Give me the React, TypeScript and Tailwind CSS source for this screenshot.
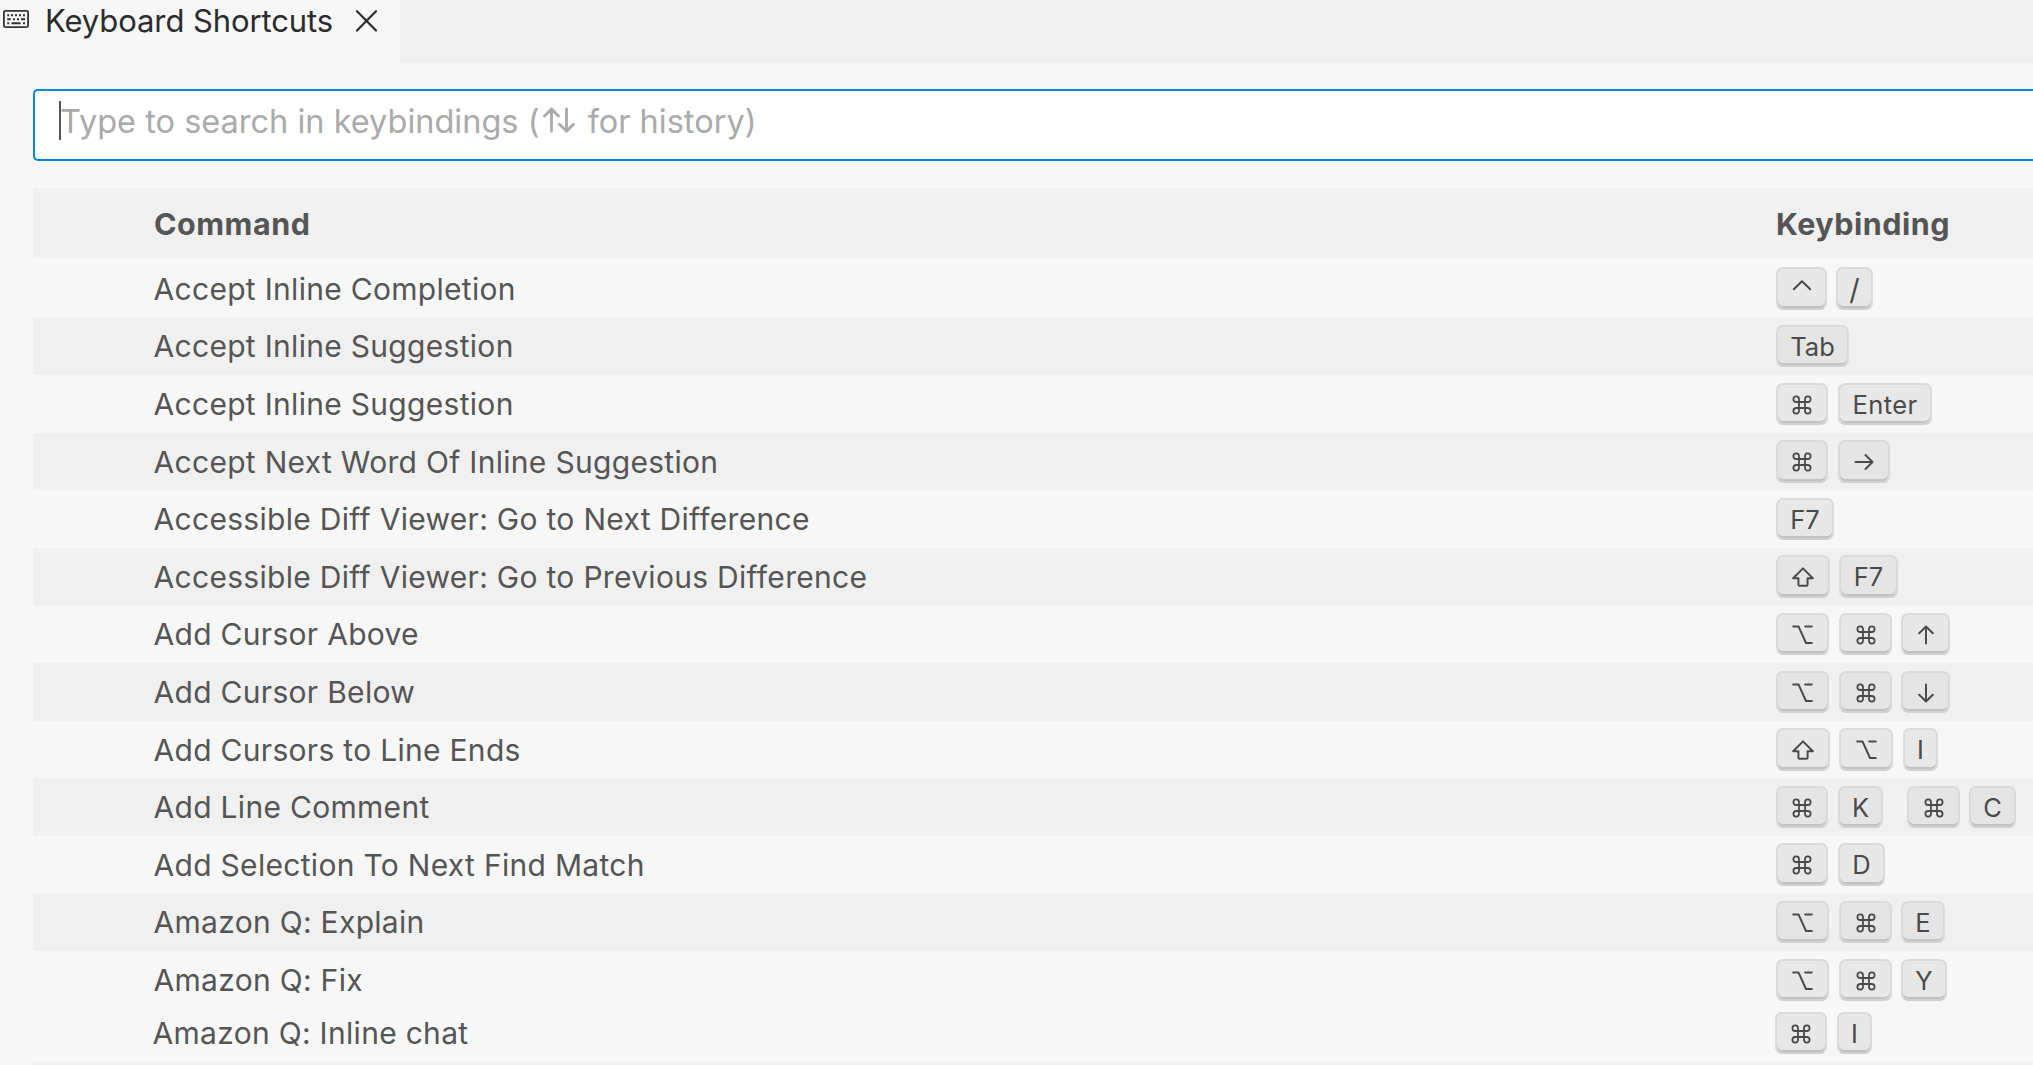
import React from "react";

type Key = { k: string; w: string; m: string };
type Chord = Key[];
type Row = { name: string; h: string; pad: string; kh: string; keys: Chord; shift?: boolean };

function Glyph({ name }: { name: string }) {
  const common = {
    fill: "none",
    stroke: "#4a4a4a",
    strokeWidth: 2,
    strokeLinecap: "round" as const,
    strokeLinejoin: "round" as const,
    className: "block shrink-0",
  };
  switch (name) {
    case "cmd":
      return (
        <svg width="20" height="20" viewBox="0 0 20 20" {...common} strokeWidth={1.8}>
          <path d="M7 4a2.800 2.800 0 1 0-2.800 3h11.600a2.800 2.800 0 1 0-2.800-3v12a2.800 2.800 0 1 0 2.800-3H4.200a2.800 2.800 0 1 0 2.800 3z" />
        </svg>
      );
    case "opt":
      return (
        <svg width="21" height="20" viewBox="0 0 21 20" {...common}>
          <path d="M1.2 1.600h5.400l7.400 16.400h5.800M13.200 1.600h6.600" />
        </svg>
      );
    case "shift":
      return (
        <svg width="22" height="20" viewBox="0 0 22 20" {...common}>
          <path d="M11 1.400 1.200 11.300h5.200v6.200q0 1.200 1.200 1.200h6.800q1.200 0 1.200-1.200v-6.200h5.200z" />
        </svg>
      );
    case "right":
      return (
        <svg width="20" height="20" viewBox="0 0 20 20" {...common}>
          <path d="M1.5 10h17M11.5 3l7 7-7 7" />
        </svg>
      );
    case "up":
      return (
        <svg width="16" height="20" viewBox="0 0 16 20" {...common}>
          <path d="M8 18.5v-17M1.200 8.300l6.800-6.800 6.800 6.800" />
        </svg>
      );
    case "down":
      return (
        <svg width="16" height="20" viewBox="0 0 16 20" {...common}>
          <path d="M8 1.500v17M1.200 11.700l6.800 6.800 6.800-6.800" />
        </svg>
      );
    case "ctrl":
      return (
        <svg width="20" height="20" viewBox="0 0 20 20" {...common}>
          <path d="M1.800 10.200l8.200-8 8.200 8" />
        </svg>
      );
    case "/":
      return <span className="text-[29px]">/</span>;
    case "Enter":
      return <span className="-mt-px tracking-[0.4px]">Enter</span>;
    default:
      return <span className="-mt-px">{name}</span>;
  }
}

const M0 = "";
const M9 = "ml-[9px]";
const M10 = "ml-[10px]";
const W35 = "w-[35px]";
const W52 = "w-[52px]";
const W53 = "w-[53px]";
const W54 = "w-[54px]";

const rows: Row[] = [
  { name: "Accept Inline Completion", h: "h-[59px]", pad: "pt-[9px]", kh: "h-[43px]", keys: [{ k: "ctrl", w: "w-[51px]", m: M0 }, { k: "/", w: "w-[37px]", m: M9 }] },
  { name: "Accept Inline Suggestion", h: "h-[58px]", pad: "pt-[8px]", kh: "h-[42px]", keys: [{ k: "Tab", w: "w-[73px]", m: M0 }] },
  { name: "Accept Inline Suggestion", h: "h-[58px]", pad: "pt-[8px]", kh: "h-[42px]", keys: [{ k: "cmd", w: W52, m: M0 }, { k: "Enter", w: "w-[94px]", m: M10 }] },
  { name: "Accept Next Word Of Inline Suggestion", h: "h-[57px]", pad: "pt-[7px]", kh: "h-[43px]", keys: [{ k: "cmd", w: W52, m: M0 }, { k: "right", w: W52, m: M10 }] },
  { name: "Accessible Diff Viewer: Go to Next Difference", h: "h-[58px]", pad: "pt-[8px]", kh: "h-[42px]", keys: [{ k: "F7", w: "w-[58px]", m: M0 }] },
  { name: "Accessible Diff Viewer: Go to Previous Difference", h: "h-[57px]", pad: "pt-[7px]", kh: "h-[43px]", keys: [{ k: "shift", w: W54, m: M0 }, { k: "F7", w: "w-[59px]", m: M9 }] },
  { name: "Add Cursor Above", h: "h-[58px]", pad: "pt-[8px]", kh: "h-[42px]", keys: [{ k: "opt", w: W53, m: M0 }, { k: "cmd", w: W53, m: M10 }, { k: "up", w: "w-[49px]", m: M9 }] },
  { name: "Add Cursor Below", h: "h-[58px]", pad: "pt-[8px]", kh: "h-[42px]", keys: [{ k: "opt", w: W53, m: M0 }, { k: "cmd", w: W53, m: M10 }, { k: "down", w: "w-[49px]", m: M9 }] },
  { name: "Add Cursors to Line Ends", h: "h-[57px]", pad: "pt-[7px]", kh: "h-[43px]", keys: [{ k: "shift", w: W54, m: M0 }, { k: "opt", w: W54, m: M9 }, { k: "I", w: W35, m: M10 }] },
  { name: "Add Line Comment", h: "h-[58px]", pad: "pt-[8px]", kh: "h-[42px]", keys: [{ k: "cmd", w: W52, m: M0 }, { k: "K", w: "w-[45px]", m: M10 }, { k: "cmd", w: W53, m: "ml-[24px]" }, { k: "C", w: "w-[47px]", m: M9 }] },
  { name: "Add Selection To Next Find Match", h: "h-[57px]", pad: "pt-[7px]", kh: "h-[43px]", keys: [{ k: "cmd", w: W52, m: M0 }, { k: "D", w: "w-[47px]", m: M10 }] },
  { name: "Amazon Q: Explain", h: "h-[58px]", pad: "pt-[8px]", kh: "h-[42px]", keys: [{ k: "opt", w: W53, m: M0 }, { k: "cmd", w: W53, m: M10 }, { k: "E", w: "w-[44px]", m: M9 }] },
  { name: "Amazon Q: Fix", h: "h-[53px]", pad: "pt-[8px]", kh: "h-[42px]", keys: [{ k: "opt", w: W53, m: M0 }, { k: "cmd", w: W53, m: M10 }, { k: "Y", w: "w-[46px]", m: M9 }] },
  { name: "Amazon Q: Inline chat", h: "h-[58px]", pad: "pt-[8px]", kh: "h-[42px]", shift: true, keys: [{ k: "cmd", w: W52, m: M0 }, { k: "I", w: W35, m: M10 }] },
];

function KeyCap({ item, height }: { item: Key; height: string }) {
  return (
    <div
      className={`${item.w} ${item.m} ${height} flex shrink-0 justify-center rounded-[7px] border-2 border-[#dadada] border-b-[#d0d0d0] bg-[#dddddd]/55 pt-[10px] text-[25.500px] leading-[22px] whitespace-nowrap text-[#4a4a4a] shadow-[inset_0_-2px_0_#c2c2c2]`}
    >
      <Glyph name={item.k} />
    </div>
  );
}

function KeyboardIcon() {
  return (
    <svg width="26" height="18" viewBox="0 0 26 18" fill="none" stroke="#333" className="block">
      <rect x="0.9" y="0.9" width="24.2" height="16.200" rx="1.500" strokeWidth="1.8" />
      <path d="M4.200 5.300h2M8 5.300h2M12 5.300h2M16 5.300h2M20 5.300h2M4.200 9.200h3.500M10 9.200h2M14 9.200h2M18 9.200h4M4.200 13.200h2M8.500 13.200h9M20 13.200h2" strokeWidth="1.900" />
    </svg>
  );
}

export default function App() {
  return (
    <div className="flex h-[1065px] w-[2033px] flex-col overflow-hidden bg-[#f7f7f7] font-['Inter',sans-serif] text-[#555555]">
      <div className="flex h-[63px] shrink-0 bg-[#f0f0f0]">
        <div className="flex h-full w-[400px] shrink-0 bg-[#f7f7f7] text-[#2c2c2c]">
          <div className="mt-[10px] ml-[3px] w-[26px] shrink-0"><KeyboardIcon /></div>
          <span className="ml-[16px] w-[290px] shrink-0 text-[31px] leading-[42px] tracking-[-0.1px] whitespace-nowrap">Keyboard Shortcuts</span>
          <svg width="22" height="22" viewBox="0 0 22 22" className="mt-[10px] ml-[20px] block shrink-0" fill="none" stroke="#2c2c2c" strokeWidth="2.200" strokeLinecap="round">
            <path d="M2 1.200l19 19.300M21 1.200l-19 19.300" />
          </svg>
        </div>
      </div>
      <div className="mt-[26px] ml-[33px] flex h-[72px] shrink-0 rounded-l-[5px] border-2 border-r-0 border-[#0088e0] bg-white">
        <div className="mt-[10px] ml-[24px] h-[39px] w-[2px] shrink-0 bg-[#555]" />
        <div className="-ml-px flex pt-[10px] text-[32.500px] leading-[42px] whitespace-pre text-[#aaaaaa]">
          <span>Type to search in keybindings (</span>
          <svg width="32" height="26" viewBox="0 0 32 26" className="mt-[6px] mr-[4px] ml-[3px] block" fill="none" stroke="#aaaaaa" strokeWidth="2.800" strokeLinecap="round" strokeLinejoin="round">
            <path d="M8.500 24.300V2M1.500 9l7-7 7 7M23.500 2v22.300M16.500 17.300l7 7 7-7" />
          </svg>
          <span> for history)</span>
        </div>
      </div>
      <div className="mt-[27px] ml-[33px] flex h-[70px] shrink-0 bg-[#f0f0f0] text-[30.500px] leading-[72px] font-bold tracking-[0.5px]">
        <span className="w-[1743px] shrink-0 pl-[121px]">Command</span>
        <span>Keybinding</span>
      </div>
      <div className="ml-[33px] flex flex-col">
        {rows.map((row, i) => (
          <div key={i} className={`flex shrink-0 ${row.h} ${i % 2 && !row.shift ? "bg-[#f0f0f0]" : ""} ${row.shift ? "-ml-px" : ""}`}>
            <span className={`w-[1743px] shrink-0 pl-[120.500px] text-[30px] tracking-[0.3px] whitespace-nowrap ${i === 0 ? "leading-[62px]" : "leading-[58px]"}`}>{row.name}</span>
            <div className={`flex ${row.pad}`}>
              {row.keys.map((item, j) => (
                <KeyCap key={j} item={item} height={row.kh} />
              ))}
            </div>
          </div>
        ))}
        <div className="-ml-px h-[3px] shrink-0 bg-[#f0f0f0]" />
      </div>
    </div>
  );
}
